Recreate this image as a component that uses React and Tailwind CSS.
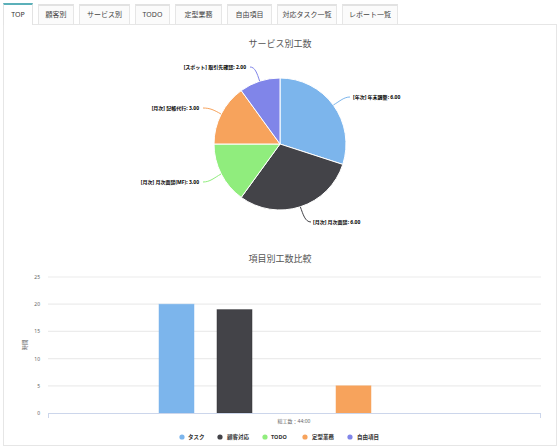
import React from 'react';

const TABS = [
  { label: 'TOP', w: 'w-[30px]' },
  { label: '顧客別', w: 'w-[36px]' },
  { label: 'サービス別', w: 'w-[51px]' },
  { label: 'TODO', w: 'w-[35px]' },
  { label: '定型業務', w: 'w-[47px]' },
  { label: '自由項目', w: 'w-[45px]' },
  { label: '対応タスク一覧', w: 'w-[60px]' },
  { label: 'レポート一覧', w: 'w-[56px]' },
];

const SLICES = [
  { name: '[年次] 年末調整', value: 6, color: '#7cb5ec' },
  { name: '[月次] 月次面談', value: 6, color: '#434348' },
  { name: '[月次] 月次面談(MF)', value: 3, color: '#90ed7d' },
  { name: '[月次] 記帳代行', value: 3, color: '#f7a35c' },
  { name: '[スポット] 取引先確認', value: 2, color: '#8085e9' },
];

// label placement, page coords
const LABELS = [
  { x: 353, y: 97, anchor: 'start', line: 'M 333.4 105 C 340 101, 344 97, 350 97' },
  { x: 313, y: 222, anchor: 'start', line: 'M 300.4 207 C 303 214, 305 222, 311 222' },
  { x: 199, y: 182, anchor: 'end', line: 'M 221 174 C 214 178, 210 182, 203 182' },
  { x: 199, y: 108, anchor: 'end', line: 'M 221 114 C 214 110, 210 108, 203 108' },
  { x: 246, y: 67, anchor: 'end', line: 'M 259.6 81 C 257 73, 255 67, 250 67' },
];

const BARS = [
  { name: 'タスク', value: 20, color: '#7cb5ec', x: 159 },
  { name: '顧客対応', value: 19, color: '#434348', x: 217 },
  { name: 'TODO', value: 0, color: '#90ed7d', x: 276 },
  { name: '定型業務', value: 5, color: '#f7a35c', x: 336 },
  { name: '自由項目', value: 0, color: '#8085e9', x: 395 },
];

const LEGEND = [
  { x: 182, tx: 188 },
  { x: 220, tx: 227 },
  { x: 265, tx: 271 },
  { x: 305, tx: 312 },
  { x: 350, tx: 357 },
];

function PieChart() {
  const cx = 280, cy = 144, r = 66;
  const total = SLICES.reduce((s, d) => s + d.value, 0);
  let acc = 0;
  const pt = (a) => [cx + r * Math.sin(a), cy - r * Math.cos(a)];
  return (
    <svg width="552" height="185" className="block">
      <g transform="translate(-4,-50)">
        {SLICES.map((s, i) => {
          const a0 = (acc / total) * Math.PI * 2;
          acc += s.value;
          const a1 = (acc / total) * Math.PI * 2;
          const [x0, y0] = pt(a0);
          const [x1, y1] = pt(a1);
          const large = a1 - a0 > Math.PI ? 1 : 0;
          return (
            <path key={i} d={`M ${cx} ${cy} L ${x0} ${y0} A ${r} ${r} 0 ${large} 1 ${x1} ${y1} Z`}
              fill={s.color} stroke="#ffffff" strokeWidth="1" strokeLinejoin="round" />
          );
        })}
        {LABELS.map((l, i) => (
          <g key={i}>
            <path d={l.line} fill="none" stroke={SLICES[i].color} strokeWidth="1" />
            <text x={l.x} y={l.y} textAnchor={l.anchor} dominantBaseline="central"
              fontSize="5" fontWeight="700" fill="#000000">
              {SLICES[i].name}: {SLICES[i].value.toFixed(2)}
            </text>
          </g>
        ))}
      </g>
    </svg>
  );
}

function BarChart() {
  const y0 = 413, unit = (413 - 277) / 25;
  const ticks = [0, 5, 10, 15, 20, 25];
  return (
    <svg width="552" height="180" className="block">
      <g transform="translate(-4,-265)">
        {ticks.map((t) => {
          const y = y0 - t * unit;
          return (
            <g key={t}>
              {t > 0 && <line x1="48" x2="541" y1={y} y2={y} stroke="#ececec" strokeWidth="1.2" />}
              <text x="40" y={y} textAnchor="end" dominantBaseline="central" fontSize="5" fill="#666666">{t}</text>
            </g>
          );
        })}
        <text x="25" y="345" textAnchor="middle" dominantBaseline="central" fontSize="5.5" fill="#666666"
          transform="rotate(-90 25 345)">時間</text>
        {BARS.filter((b) => b.value > 0).map((b) => (
          <rect key={b.name} x={b.x} y={y0 - b.value * unit} width="35" height={b.value * unit}
            fill={b.color} stroke={b.color === '#434348' ? '#2e2e33' : b.color} strokeOpacity="0.6" strokeWidth="0.8" />
        ))}
        <path d="M 48 413.5 L 541 413.5 M 48.5 413 L 48.5 418 M 540.5 413 L 540.5 418" stroke="#ccd6eb" strokeWidth="1" fill="none" />
        <text x="294" y="421" textAnchor="middle" dominantBaseline="central" fontSize="5" fill="#666666">総工数：44:00</text>
        {BARS.map((b, i) => (
          <g key={b.name}>
            <circle cx={LEGEND[i].x} cy="437" r="2.6" fill={b.color} />
            <text x={LEGEND[i].tx} y="437" dominantBaseline="central" fontSize="5.5" fontWeight="700" fill="#333333">{b.name}</text>
          </g>
        ))}
      </g>
    </svg>
  );
}

export default function App() {
  return (
    <div className="w-[560px] h-[447px] overflow-hidden bg-white pt-[3px] pl-[3px] text-[#333] font-['Noto_Sans','Noto_Sans_CJK_JP',sans-serif]">
      <div className="flex gap-[5px] h-[21px] items-end relative z-10">
        {TABS.map((t, i) => (
          <div key={t.label}
            className={`${t.w} shrink-0 flex items-center justify-center text-[7px] ${i === 0
              ? 'h-[22px] -mb-px bg-white border-x border-x-[#e3e3e3] border-t-2 border-t-[#5bb0b9]'
              : 'h-[20px] bg-[#fbfbfb] border-x border-x-[#e6e6e6] border-t-2 border-t-[#e2e2e2] text-[#444]'}`}>
            {t.label}
          </div>
        ))}
      </div>
      <div className="w-[554px] h-[422px] border border-[#e6e6e6] bg-white">
        <div className="mt-[13px] h-[12px] leading-[12px] text-center text-[9px] text-[#555]">サービス別工数</div>
        <PieChart />
        <div className="mt-[18px] h-[12px] leading-[12px] text-center text-[9px] text-[#555]">項目別工数比較</div>
        <BarChart />
      </div>
    </div>
  );
}
